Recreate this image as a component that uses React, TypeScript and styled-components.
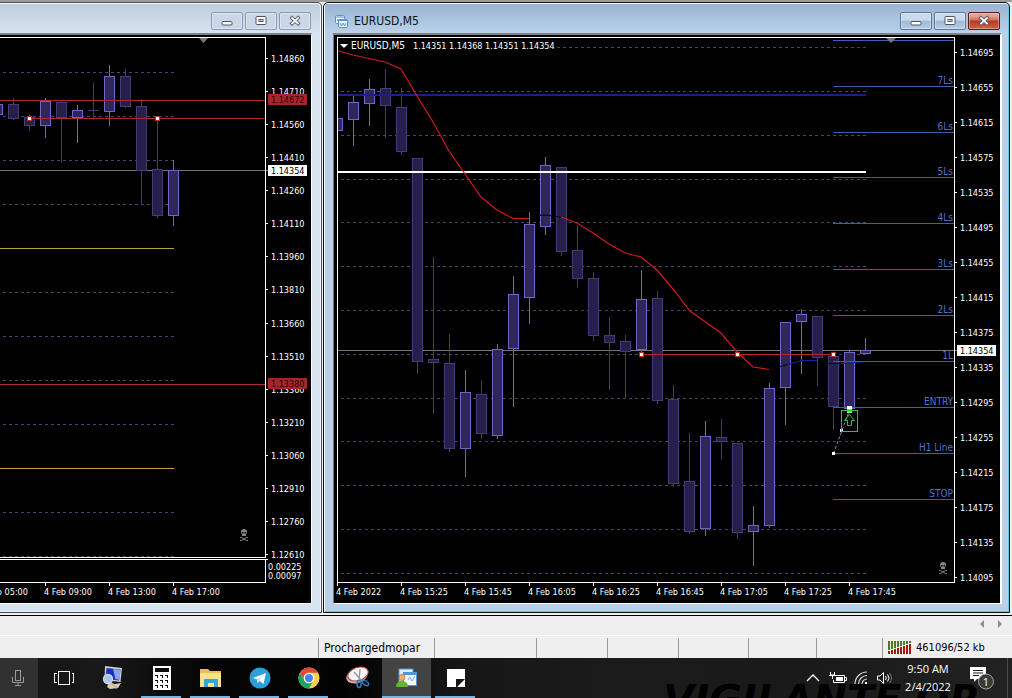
import React from 'react';
import styled, { createGlobalStyle } from 'styled-components';

const GlobalStyle = createGlobalStyle`
  * { box-sizing: border-box; }
  body { margin: 0; background: #efefef; font-family: "DejaVu Sans Condensed", "Noto Sans", sans-serif; }
  button { font: inherit; padding: 0; margin: 0; border: 0; background: none; color: inherit; }
  svg { display: block; }
`;

/* ---------- page ---------- */

const Page = styled.div`
  display: flex;
  flex-direction: column;
  min-height: 100vh;
`;

const Workspace = styled.main`
  display: grid;
  grid-template-columns: 322fr 687fr;
  gap: 1px;
  padding: 2px 2px 2px 0;
  background: #efefef;
  border-bottom: 1px solid #000;
  box-shadow: inset 0 2px #9c9c98;
`;

const WindowFrame = styled.section<{ $active?: boolean }>`
  display: flex;
  flex-direction: column;
  min-width: 0;
  background: ${p => (p.$active ? '#bad0e9' : '#d8e3f0')};
  border: 1px solid ${p => (p.$active ? '#101418' : '#4c5058')};
  border-left-width: ${p => (p.$active ? '1px' : '0')};
  border-radius: ${p => (p.$active ? '5px 5px 0 0' : '0 5px 0 0')};
  box-shadow: ${p =>
    p.$active ? 'inset 1px 1px #f4f8fc, inset -1px -1px #5cc8ea' : 'inset -1px 1px #f4f8fc, inset 0 -1px #e9f0f7'};
  padding: ${p => (p.$active ? '1px 7px 8px 9px' : '1px 9px 8px 0')};
`;

const TitleBar = styled.header<{ $active?: boolean }>`
  display: flex;
  align-items: center;
  gap: 5px;
  height: 29px;
  margin: ${p => (p.$active ? '0 -6px 0 -8px' : '0 -8px 0 0')};
  padding: ${p => (p.$active ? '4px 8px 0 9px' : '4px 9px 0 0')};
  border-radius: 0 4px 0 0;
  background: ${p =>
    p.$active ? 'linear-gradient(#9ab4d1, #b9d1ea)' : 'linear-gradient(#becddc, #d7e3f0)'};
`;

const Title = styled.h1`
  flex: 1;
  margin: 0;
  padding-top: 1px;
  font-weight: 400;
  font-size: 12px;
  line-height: 16px;
  color: #101010;
`;

const Buttons = styled.div`
  display: flex;
  gap: 2px;
  margin-left: auto;
`;

const WinButton = styled.button<{ $tone: 'idle' | 'blue' | 'red' }>`
  display: grid;
  place-items: center;
  width: 32px;
  height: 18px;
  border-radius: 2px;
  border: 1px solid ${p => ({ idle: '#8b9bb5', blue: '#5f7694', red: '#541a1a' })[p.$tone]};
  background: ${p =>
    ({
      idle: '#cbd7e6',
      blue: 'linear-gradient(#c9daec 0 45%, #9fb8d4 50%, #b5cde7)',
      red: 'linear-gradient(#e0a293 0 20%, #cf6a55 45%, #b33a24 50%, #d0624a)',
    })[p.$tone]};
  box-shadow: inset 0 0 0 1px rgba(255, 255, 255, 0.35);
`;

const Client = styled.div<{ $active?: boolean }>`
  background: #000;
  border: 0 solid #fafcff;
  border-top: 2px solid #7d8287;
  border-right-width: ${p => (p.$active ? '2px' : '1px')};
  border-bottom-width: 1px;
  ${p => p.$active && 'border-left: 1px solid #74787c;'}
  svg { width: 100%; height: auto; }
`;

/* ---------- chart drawing ---------- */

type Candle = [x: number, high: number, top: number, bottom: number, low: number, up: 0 | 1];

const h4Candles: Candle[] = [
  [-3, 104, 104, 114, 114, 1],
  [13, 98, 104, 118, 119, 0],
  [29, 114, 117, 125, 130, 0],
  [45, 98, 101, 125, 137, 1],
  [61, 100, 102, 117, 162, 0],
  [77, 105, 110, 117, 142, 1],
  [93, 83, 110, 110, 119, 0],
  [109, 65, 76, 111, 125, 1],
  [125, 69, 76, 106, 107, 0],
  [141, 99, 106, 170, 203, 0],
  [157, 119, 169, 215, 217, 0],
  [173, 160, 170, 215, 225, 1],
];

const m5Candles: Candle[] = [
  [337, 112, 118, 130, 144, 1],
  [353, 96, 102, 119, 145, 1],
  [369, 79, 89, 103, 125, 1],
  [385, 69, 88, 105, 137, 0],
  [401, 88, 107, 151, 154, 0],
  [417, 158, 158, 361, 373, 0],
  [433, 257, 359, 362, 413, 0],
  [449, 334, 363, 448, 451, 0],
  [465, 370, 392, 448, 476, 1],
  [481, 380, 394, 433, 438, 0],
  [497, 344, 349, 435, 438, 1],
  [513, 276, 294, 348, 406, 1],
  [529, 212, 224, 297, 323, 1],
  [545, 157, 165, 226, 234, 1],
  [561, 167, 167, 251, 255, 0],
  [577, 225, 250, 278, 287, 0],
  [593, 272, 278, 335, 340, 0],
  [609, 317, 335, 342, 389, 0],
  [625, 335, 341, 351, 398, 0],
  [641, 270, 299, 349, 351, 1],
  [657, 291, 298, 400, 403, 0],
  [673, 385, 399, 483, 486, 0],
  [689, 433, 481, 531, 533, 0],
  [705, 421, 436, 528, 535, 1],
  [721, 419, 437, 441, 459, 0],
  [737, 443, 443, 532, 538, 0],
  [753, 506, 525, 531, 565, 1],
  [769, 383, 388, 525, 527, 1],
  [785, 322, 322, 387, 424, 1],
  [801, 309, 314, 321, 373, 1],
  [817, 316, 316, 357, 385, 0],
  [833, 356, 356, 406, 429, 0],
  [849, 350, 352, 408, 408, 1],
  [865, 338, 350, 353, 353, 1],
];

const ChartText = styled.text<{ $size?: number }>`
  font: ${p => p.$size ?? 9}px "DejaVu Sans Condensed", "Noto Sans", sans-serif;
  fill: #fff;
  white-space: pre;
`;

const LevelText = styled(ChartText)`
  fill: #5272c8;
  text-anchor: end;
`;

function Candles({ data }: { data: Candle[] }) {
  return (
    <g shapeRendering="crispEdges">
      {data.map(([x, high, top, bottom, low, up]) => {
        const stroke = up ? '#6f66cb' : '#443c79';
        return (
          <g key={x} stroke={stroke} fill={up ? '#2d2859' : '#271f4b'}>
            <path d={`M${x + 0.5} ${high}V${low + 1}`} />
            {top === bottom ? (
              <path d={`M${x - 5} ${top + 0.5}h11`} />
            ) : (
              <rect x={x - 4.5} y={top + 0.5} width={10} height={bottom - top} />
            )}
          </g>
        );
      })}
    </g>
  );
}

function HLine(p: { y: number; x1: number; x2: number; color: string; dash?: boolean; w?: number }) {
  const w = p.w ?? 1;
  return (
    <path
      d={`M${p.x1} ${p.y + w / 2}H${p.x2}`}
      stroke={p.color}
      strokeWidth={w}
      strokeDasharray={p.dash ? '3 3' : undefined}
      shapeRendering="crispEdges"
    />
  );
}

function Handle({ x, y }: { x: number; y: number }) {
  return (
    <g shapeRendering="crispEdges">
      <rect x={x - 2} y={y - 2} width={5} height={5} fill="#c22a24" />
      <rect x={x - 1} y={y - 1} width={3} height={3} fill="#fff" />
    </g>
  );
}

function PriceAxis(p: { x: number; textX: number; from: number; step: number; first: number; stepPrice: number }) {
  return (
    <g>
      {Array.from({ length: 16 }, (_, i) => {
        const y = Math.round(p.from + i * p.step);
        return (
          <g key={i}>
            <HLine y={y} x1={p.x} x2={p.x + 3} color="#fff" />
            <ChartText x={p.textX} y={y + 4}>
              {`1.${p.first - i * p.stepPrice}`}
            </ChartText>
          </g>
        );
      })}
    </g>
  );
}

function PriceTag(p: { x: number; y: number; textX: number; label: string; bg: string; fg: string }) {
  return (
    <g>
      <rect x={p.x} y={p.y} width={39} height={11} fill={p.bg} />
      <ChartText x={p.textX} y={p.y + 9} style={{ fill: p.fg }}>
        {p.label}
      </ChartText>
    </g>
  );
}

function TimeAxis({ items, y }: { items: [number, string][]; y: number }) {
  return (
    <g>
      {items.map(([x, label]) => (
        <g key={x}>
          <path d={`M${x + 0.5} ${y}v3`} stroke="#fff" shapeRendering="crispEdges" />
          <ChartText x={x - 1} y={595}>
            {label}
          </ChartText>
        </g>
      ))}
    </g>
  );
}

function Skull({ x, y }: { x: number; y: number }) {
  return (
    <g transform={`translate(${x} ${y})`}>
      <path d="M-3 -3a3 3 0 0 1 6 0q0 2-1 2v2h-4v-2q-1 0-1-2z" fill="#858585" />
      <path d="M-2 -3h1.500v1.500h-1.500zM.5 -3h1.500v1.500h-1.500z" fill="#000" />
      <path d="M-4 2.500h1.500l5 3h1.500M4 2.500h-1.500l-5 3h-1.500" stroke="#858585" fill="none" />
    </g>
  );
}

function H4Chart() {
  return (
    <svg viewBox="0 35 311 568" role="img" aria-label="EURUSD H4 chart">
      {[72, 116, 160, 204, 292, 336, 380, 424, 512, 556].map(y => (
        <HLine key={y} y={y} x1={3} x2={174} color="#48456e" dash />
      ))}
      <HLine y={248} x1={0} x2={174} color="#c0a03c" />
      <HLine y={468} x1={0} x2={174} color="#c0a03c" />
      <HLine y={170} x1={0} x2={268} color="#777" />
      <Candles data={h4Candles} />
      <HLine y={100} x1={0} x2={265} color="#b3282c" />
      <HLine y={118} x1={29} x2={265} color="#b3282c" />
      <HLine y={384} x1={0} x2={265} color="#b3282c" />
      <Handle x={29} y={118} />
      <Handle x={157} y={118} />
      <path d="M199 38h9l-4.500 5z" fill="#777" />
      <path
        d="M0 37.500H265.500V557.500H0M0 559.500H265.500V582.500H0M265 559.500h3"
        fill="none"
        stroke="#fff"
        shapeRendering="crispEdges"
      />
      <PriceAxis x={265} textX={271} from={58} step={33.070} first={14860} stepPrice={150} />
      <PriceTag x={268} y={94} textX={271} label="1.14672" bg="#a9242a" fg="#2c0507" />
      <PriceTag x={268} y={378} textX={271} label="1.13380" bg="#a9242a" fg="#2c0507" />
      <PriceTag x={268} y={165} textX={271} label="1.14354" bg="#fff" fg="#000" />
      <ChartText x={268} y={570}>0.00225</ChartText>
      <ChartText x={268} y={579}>0.00097</ChartText>
      <TimeAxis
        y={583}
        items={[
          [-19, '4 Feb 05:00'],
          [45, '4 Feb 09:00'],
          [109, '4 Feb 13:00'],
          [173, '4 Feb 17:00'],
        ]}
      />
      <Skull x={244} y={535} />
    </svg>
  );
}

const levels: [number, string][] = [
  [40, ''],
  [86, '7Ls'],
  [132, '6Ls'],
  [177, '5Ls'],
  [223, '4Ls'],
  [269, '3Ls'],
  [315, '2Ls'],
  [361, '1L'],
  [407, 'ENTRY'],
  [453, 'H1 Line'],
  [499, 'STOP'],
];

function M5Chart() {
  return (
    <svg viewBox="334 35 666 568" role="img" aria-label="EURUSD M5 chart">
      {[47, 91, 135, 179, 222, 266, 310, 354, 398, 441, 485, 529, 573].map(y => (
        <HLine key={y} y={y} x1={341} x2={867} color="#48456e" dash />
      ))}
      <rect x={338} y={40} width={219} height={12} fill="#000" />
      <HLine y={350} x1={338} x2={957} color="#777" />
      <Candles data={m5Candles} />
      <rect x={330} y={38} width={7} height={540} fill="#000" />
      <HLine y={94} x1={338} x2={866} color="#201e86" w={2} />
      <HLine y={171} x1={338} x2={866} color="#fff" w={2} />
      <g fill="none" strokeWidth="1.200">
        <path
          stroke="#d01a1c"
          d="M337 50.500L353 55 369 58.500 385 62 401 69 417 96 433 122 449 151 465 174 481 197 497 210 513 218.500H529M561 217L577 223 593 233 609 244 625 253 641 257 657 270 673 289 690 311 721 333 737 352 753 367 769 369.500"
        />
        <path stroke="#08061c" d="M540 215.500L545 215 561 217M780 366.500L790 364M828 363.500H841" />
        <path stroke="#1a1ab4" d="M787 365L801 360.500H817M841 363.500L849 363 866 361.500" />
      </g>
      {levels.map(([y, name]) => (
        <g key={y}>
          <HLine y={y} x1={833} x2={954} color="#3d5cb4" />
          {name && (
            <LevelText $size={10} x={953} y={y - 2}>
              {name}
            </LevelText>
          )}
        </g>
      ))}
      <HLine y={354} x1={641} x2={833} color="#b3282c" />
      <Handle x={641} y={354} />
      <Handle x={737} y={354} />
      <Handle x={833} y={354} />
      <path d="M833.500 453.500L849.500 410" stroke="#8a86c0" strokeDasharray="3 2" />
      <g fill="#fff" shapeRendering="crispEdges">
        <rect x={832} y={452} width={3} height={3} />
        <rect x={840} y={429} width={3} height={3} />
        <rect x={847} y={406} width={5} height={3} />
        <rect x={847} y={409} width={5} height={4} fill="#7fe08f" />
      </g>
      <rect x={841.500} y={410.500} width={16} height={21} fill="none" stroke="#24cc2c" />
      <path d="M849.500 414.500l5 6h-3v5h-4v-5h-3z" fill="none" stroke="#24cc2c" />
      <path d="M886 38h10l-5 5z" fill="#777" />
      <path d="M337.500 582V37.500H954.500V582M337 582.500H955" fill="none" stroke="#fff" shapeRendering="crispEdges" />
      <path d="M340 44h8l-4 4z" fill="#fff" />
      <ChartText $size={10} x={351} y={49}>EURUSD,M5</ChartText>
      <ChartText x={413} y={49}>1.14351 1.14368 1.14351 1.14354</ChartText>
      <PriceAxis x={954} textX={960} from={52} step={35} first={14695} stepPrice={40} />
      <PriceTag x={957} y={345} textX={960} label="1.14354" bg="#fff" fg="#000" />
      <TimeAxis
        y={583}
        items={[
          [337, '4 Feb 2022'],
          [401, '4 Feb 15:25'],
          [465, '4 Feb 15:45'],
          [529, '4 Feb 16:05'],
          [593, '4 Feb 16:25'],
          [657, '4 Feb 16:45'],
          [721, '4 Feb 17:05'],
          [785, '4 Feb 17:25'],
          [849, '4 Feb 17:45'],
        ]}
      />
      <Skull x={943} y={568} />
    </svg>
  );
}

/* ---------- window controls ---------- */

function WindowButtons({ active }: { active?: boolean }) {
  const tone = active ? 'blue' : 'idle';
  return (
    <Buttons>
      <WinButton $tone={tone} aria-label="Minimize">
        <svg width="12" height="12" fill="#fff" stroke="#4e5566">
          <rect x="1" y="6.500" width="10" height="3.500" rx="1" />
        </svg>
      </WinButton>
      <WinButton $tone={tone} aria-label="Restore">
        <svg width="12" height="12" fill="#fff" stroke="#4e5566">
          <rect x="1" y="1.500" width="10" height="8" rx="1" />
          <rect x="4" y="4.500" width="4" height="2" fill="#b5c6da" />
        </svg>
      </WinButton>
      <WinButton $tone={active ? 'red' : 'idle'} aria-label="Close">
        <svg width="12" height="12" fill="none" strokeLinecap="square">
          <path d="M3 3l6 5.500M9 3l-6 5.500" stroke="#4e5566" strokeWidth="3.600" />
          <path d="M3 3l6 5.500M9 3l-6 5.500" stroke="#fff" strokeWidth="1.800" />
        </svg>
      </WinButton>
    </Buttons>
  );
}

const ChartIcon = () => (
  <svg width="15" height="14" fill="#eef6ff" stroke="#5b93d2">
    <rect x="1.500" y="1.500" width="9" height="8" rx="1" />
    <path d="M1 3h10M3 7l1-2 1 2 1-2" fill="none" />
    <rect x="4.500" y="5.500" width="9" height="8" rx="1" />
    <path d="M4 6.500h10M6 9l1.500 3L9 9l1.500 3L12 9" fill="none" />
  </svg>
);

/* ---------- status area ---------- */

const ScrollStrip = styled.div`
  display: flex;
  justify-content: flex-end;
  align-items: center;
  gap: 10px;
  height: 20px;
  padding: 0 8px 3px 0;
  border-bottom: 1px solid #fff;
`;

const StatusBar = styled.footer`
  display: grid;
  grid-template-columns: 318fr 116fr 102fr 71fr 71fr 70fr 68fr 66fr 130fr;
  height: 22px;
  padding-top: 2px;
`;

const StatusCell = styled.div<{ $small?: boolean }>`
  min-width: 0;
  display: flex;
  align-items: center;
  gap: 4px;
  padding-left: 5px;
  white-space: nowrap;
  font-size: ${p => (p.$small ? '11px' : '12px')};
  line-height: 16px;
  color: #000;
  & + & { border-left: 1px solid #999; }
`;

const TrafficIcon = () => (
  <svg width="24" height="14" shapeRendering="crispEdges">
    {[0, 1, 2, 3, 4, 5, 6, 7].map(i => (
      <g key={i}>
        <rect x={i * 3} y={0} width={2} height={9 - i} fill="#4d7a1e" />
        <rect x={i * 3} y={10 - i} width={2} height={3 + i} fill="#9c1c14" />
      </g>
    ))}
  </svg>
);

/* ---------- taskbar ---------- */

const Taskbar = styled.nav`
  position: relative;
  isolation: isolate;
  overflow: hidden;
  display: flex;
  align-items: stretch;
  height: 40px;
  color: #fff;
  background: linear-gradient(90deg, #161616 0, #181818 10%, #060606 20%, #020202 34%, #161616 45%, #1b1b1b 60%, #1a1a1a 80%, #222 100%);
`;

/* Lettering of the desktop wallpaper that shines through the glass bar. */
const WallpaperLettering = styled.span`
  position: absolute;
  z-index: -1;
  top: 22px;
  right: 32px;
  white-space: nowrap;
  font: italic 700 40px/40px "DejaVu Sans", sans-serif;
  color: #020202;
`;

const MicButton = styled.button`
  display: grid;
  place-items: center;
  width: 38px;
  padding-right: 3px;
  background: #313131;
`;

const TaskButton = styled.button<{ $state?: 'open' | 'active' }>`
  position: relative;
  display: grid;
  place-items: center;
  width: 49px;
  background: ${p => (p.$state === 'active' ? '#434343' : 'transparent')};
  &::after {
    content: '';
    position: absolute;
    bottom: 0;
    left: ${p => (p.$state === 'active' ? '0' : '4px')};
    right: ${p => (p.$state === 'active' ? '0' : '5px')};
    height: 2px;
    background: ${p => (p.$state ? '#76b4e3' : 'transparent')};
  }
`;

const Apps = styled.div`
  display: flex;
  padding-left: 1px;
`;

const Tray = styled.div`
  display: flex;
  align-items: center;
  gap: 8px;
  margin-left: auto;
  border-right: 1px solid #4a4a4a;
  margin-right: 4px;
  padding-right: 12px;
`;

const TrayButton = styled.button`
  display: grid;
  place-items: center;
  width: 16px;
  height: 40px;
`;

const Clock = styled.time`
  width: 62px;
  margin: 0 2px 0 -4px;
  text-align: center;
  font: 11px/18px "Open Sans", sans-serif;
`;

const NoticeButton = styled.button`
  display: grid;
  place-items: center;
  width: 26px;
  height: 40px;
`;

const TaskViewIcon = () => (
  <svg width="22" height="16" fill="none" stroke="#f2f2f2" shapeRendering="crispEdges">
    <rect x="5.500" y="1.500" width="11" height="13" />
    <path d="M3.500 3.500h-2v9h2M18.500 3.500h2v9h-2" />
  </svg>
);

const ComputerIcon = () => (
  <svg width="24" height="24">
    <path d="M4 0l17 2-1.500 14-16-2z" fill="#c9cdd6" />
    <path d="M5.500 2l14 1.500-1.500 11-13.500-1.500z" fill="#1a2fc4" />
    <path d="M12 3l7.500.700-1 10-4-.500z" fill="#8aa4f2" />
    <path d="M8 17l6 1 6-1-3 5-8 1-3-2z" fill="#d9cdb8" />
    <circle cx="7" cy="13" r="4.500" fill="#a9c3ea" stroke="#d7dbe3" strokeWidth="1.300" />
    <path d="M10 17l6 5" stroke="#c8b79c" strokeWidth="2" />
  </svg>
);

const CalculatorIcon = () => (
  <svg width="18" height="24" shapeRendering="crispEdges">
    <rect width="18" height="24" fill="#fff" />
    <rect x="2" y="2" width="14" height="4" fill="#0a0a0a" />
    {[9, 14, 19].map(y => [2, 7, 12].map(x => <path key={`${x}-${y}`} d={`M${x} ${y}h3v3h-1v-2h-2z`} fill="#0a0a0a" />))}
  </svg>
);

const FolderIcon = () => (
  <svg width="22" height="20">
    <path d="M0 1h8l2 2h11v16H0z" fill="#e9bf55" />
    <path d="M0 5h21v14H0z" fill="#fbe08d" />
    <path d="M4 19v-7q0-1 1-1h12q1 0 1 1v7h-4v-4H8v4z" fill="#37a3dd" />
  </svg>
);

const TelegramIcon = () => (
  <svg width="22" height="22">
    <circle cx="11" cy="11" r="10.500" fill="#2a9fda" />
    <path d="M4 11l13-5-2.500 11-4-3-2 2-.5-3.500z" fill="#fff" />
    <path d="M8 12.500l6-4-4.500 5-.5 2.500z" fill="#b7d6ea" />
  </svg>
);

const ChromeIcon = () => (
  <svg width="22" height="22" viewBox="0 0 48 48">
    <circle cx="24" cy="24" r="23" fill="#ffd042" />
    <path d="M4.100 12.500A23 23 0 0 1 43.900 12.500H24a11.500 11.500 0 0 0-10 17.200z" fill="#dd4b3e" />
    <path d="M4.100 12.500A23 23 0 0 0 24 47l10-17.300a11.500 11.500 0 0 1-20 0z" fill="#1da462" />
    <circle cx="24" cy="24" r="11.500" fill="#fff" />
    <circle cx="24" cy="24" r="9" fill="#4a82f0" />
  </svg>
);

const SnipIcon = () => (
  <svg width="24" height="24" fill="none">
    <ellipse cx="11" cy="10" rx="11" ry="7" fill="#d9a9a4" transform="rotate(-18 11 10)" />
    <ellipse cx="12" cy="8" rx="10.500" ry="6.500" fill="#f4f4f4" stroke="#b5403c" transform="rotate(-18 12 8)" />
    <path d="M8 6l8 9M14 3l-1 12" stroke="#8d949c" strokeWidth="1.200" />
    <ellipse cx="13" cy="18" rx="2" ry="3.500" stroke="#2f79b9" strokeWidth="1.500" />
    <ellipse cx="19.500" cy="17" rx="3.500" ry="2" stroke="#2f79b9" strokeWidth="1.500" transform="rotate(35 19.500 17)" />
  </svg>
);

const TraderIcon = () => (
  <svg width="22" height="20">
    <rect x="3" y="1" width="14" height="13" fill="#dcecfa" stroke="#4f97d3" />
    <rect x="7.500" y="4.500" width="13" height="13" fill="#eff7fd" stroke="#4f97d3" />
    <path d="M8 6h12" stroke="#4f97d3" strokeWidth="2" />
    <path d="M12 12l2-3 2 4 3-5" stroke="#7dadd6" fill="none" />
    <circle cx="6" cy="9.500" r="3" fill="#f0b566" stroke="#b9722f" strokeWidth=".8" />
    <path d="M0 19q0-6 6-6t6 6z" fill="#62b52e" />
  </svg>
);

const NotesIcon = () => (
  <svg width="18" height="18">
    <path d="M0 0h18v18H0z" fill="#fff" />
    <path d="M9 18v-8h9l-8 8z" fill="#141414" />
  </svg>
);

const apps: { name: string; icon: React.ReactNode; state?: 'open' | 'active' }[] = [
  { name: 'Task view', icon: <TaskViewIcon /> },
  { name: 'Remote desktop', icon: <ComputerIcon /> },
  { name: 'Calculator', icon: <CalculatorIcon />, state: 'open' },
  { name: 'File Explorer', icon: <FolderIcon />, state: 'open' },
  { name: 'Telegram', icon: <TelegramIcon />, state: 'open' },
  { name: 'Chrome', icon: <ChromeIcon />, state: 'open' },
  { name: 'Snipping Tool', icon: <SnipIcon /> },
  { name: 'MetaTrader', icon: <TraderIcon />, state: 'active' },
  { name: 'Sticky Notes', icon: <NotesIcon />, state: 'open' },
];

export default function App() {
  return (
    <Page>
      <GlobalStyle />
      <Workspace>
        <WindowFrame>
          <TitleBar>
            <WindowButtons />
          </TitleBar>
          <Client>
            <H4Chart />
          </Client>
        </WindowFrame>
        <WindowFrame $active>
          <TitleBar $active>
            <ChartIcon />
            <Title>EURUSD,M5</Title>
            <WindowButtons active />
          </TitleBar>
          <Client $active>
            <M5Chart />
          </Client>
        </WindowFrame>
      </Workspace>

      <ScrollStrip>
        <button aria-label="Scroll left">
          <svg width="8" height="8"><path d="M6 0v8L2 4z" fill="#8e8e8e" /></svg>
        </button>
        <button aria-label="Scroll right">
          <svg width="8" height="8"><path d="M2 0v8l4-4z" fill="#8e8e8e" /></svg>
        </button>
      </ScrollStrip>
      <StatusBar>
        <StatusCell />
        <StatusCell>Prochargedmopar</StatusCell>
        <StatusCell />
        <StatusCell />
        <StatusCell />
        <StatusCell />
        <StatusCell />
        <StatusCell />
        <StatusCell $small>
          <TrafficIcon />
          461096/52 kb
        </StatusCell>
      </StatusBar>

      <Taskbar>
        <WallpaperLettering aria-hidden="true">VIGILANTE OR</WallpaperLettering>
        <MicButton aria-label="Voice search">
          <svg width="14" height="18" fill="none" stroke="#9a9a9a">
            <rect x="4.500" y="1.500" width="5" height="10" />
            <path d="M1.500 8v5.500h11V8M7 14v3M4 16.500h6" />
          </svg>
        </MicButton>
        <Apps>
          {apps.map(a => (
            <TaskButton key={a.name} aria-label={a.name} $state={a.state}>
              {a.icon}
            </TaskButton>
          ))}
        </Apps>
        <Tray>
          <TrayButton aria-label="Show hidden icons">
            <svg width="14" height="8" fill="none" stroke="#fff" strokeWidth="1.300"><path d="M1 7l6-6 6 6" /></svg>
          </TrayButton>
          <TrayButton aria-label="Battery">
            <svg width="18" height="14" fill="none" stroke="#fff">
              <path d="M5 4.500h10.500v7H4.500V9M16 6.500h1.500v3H16" />
              <rect x="7" y="6" width="7" height="4" fill="#fff" stroke="none" />
              <path d="M1.500 1v3h4V1M0 4.500h7M3.500 5v3" />
            </svg>
          </TrayButton>
          <TrayButton aria-label="Network">
            <svg width="14" height="14" fill="none" stroke="#d8d8d8" strokeWidth="1.200">
              <path d="M1 13A12 12 0 0 1 13 1M4.500 13A8.500 8.500 0 0 1 13 4.500M8 13a5 5 0 0 1 5-5" />
              <rect x="11" y="11" width="2" height="2" fill="#fff" stroke="none" />
            </svg>
          </TrayButton>
          <TrayButton aria-label="Volume">
            <svg width="16" height="14" fill="none" stroke="#fff">
              <path d="M.5 5v4h2.500l3.500 3.500v-11L3 5z" />
              <path d="M8.500 5q1.500 2 0 4M10.500 3.500q3 3.500 0 7" />
              <path d="M12.500 2q4 5 0 10" stroke="#777" />
            </svg>
          </TrayButton>
          <Clock>
            9:50 AM
            <br />
            2/4/2022
          </Clock>
          <NoticeButton aria-label="Notifications">
            <svg width="26" height="26" fill="none">
              <path d="M1 2h16v12h-9l-3 3v-3H1z" fill="#fff" />
              <path d="M4 5.500h10M4 8h10M4 10.500h6" stroke="#1b1b1b" />
              <circle cx="17" cy="16.500" r="7.500" fill="#3a3a3a" stroke="#a5a5a5" />
              <text x="17" y="20.500" textAnchor="middle" fontFamily="Open Sans, sans-serif" fontSize="11" fill="#fff">1</text>
            </svg>
          </NoticeButton>
        </Tray>
      </Taskbar>
    </Page>
  );
}
